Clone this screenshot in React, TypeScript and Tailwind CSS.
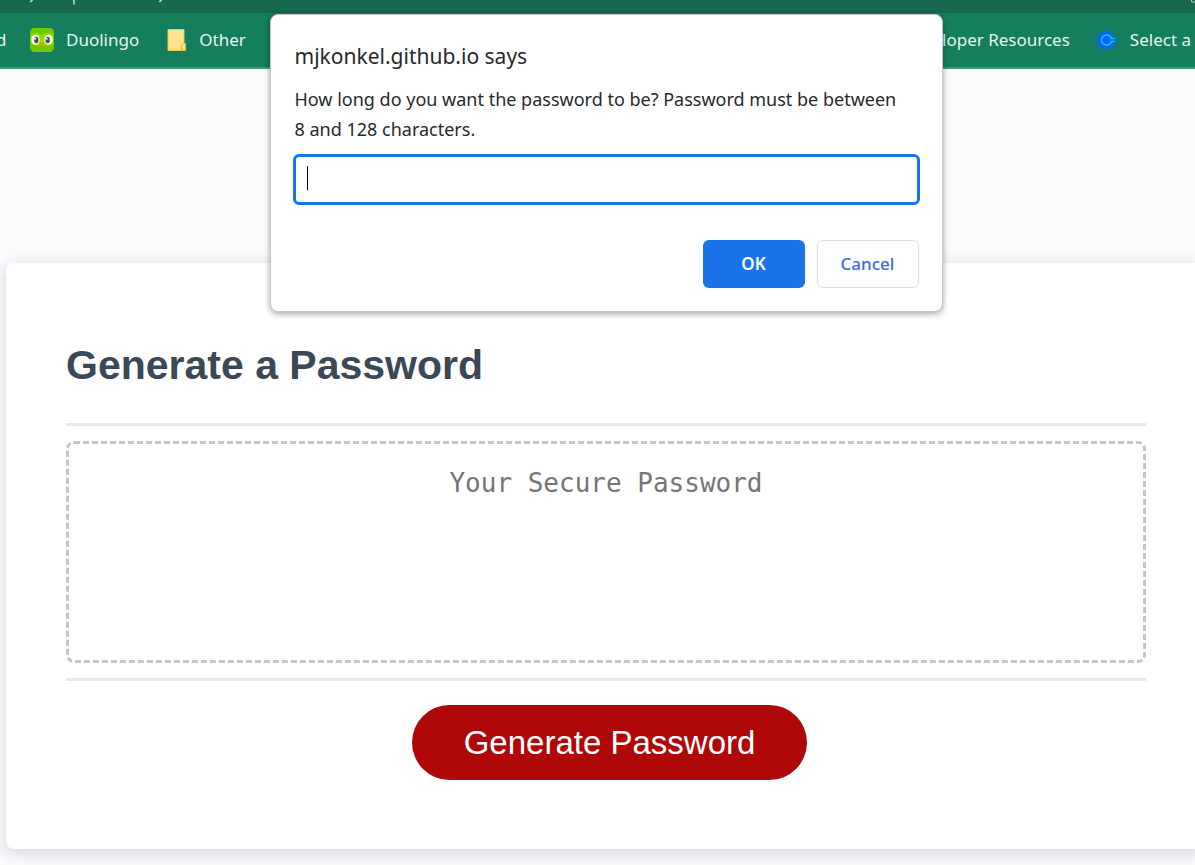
import React from "react";

const bookmarkText = "whitespace-nowrap text-[17px] leading-6 text-[#e4f5ee]";

function OwlIcon() {
  return (
    <svg width="24" height="24" viewBox="0 0 24 24" aria-hidden="true" className="shrink-0">
      <rect width="24" height="24" rx="4.500" fill="#72c800" />
      <path d="M1 8Q1 5 5.500 5Q10 5 12 7.500Q14 5 18.500 5Q23 5 23 8V14Q23 17.500 18 17.500H6Q1 17.500 1 14Z" fill="#8fe000" />
      <ellipse cx="5.500" cy="11.800" rx="4.200" ry="5" fill="#fff" />
      <ellipse cx="18.500" cy="11.800" rx="4.200" ry="5" fill="#fff" />
      <ellipse cx="6.300" cy="12" rx="2.200" ry="3.200" fill="#4b4b4b" />
      <ellipse cx="17.700" cy="12" rx="2.200" ry="3.200" fill="#4b4b4b" />
      <circle cx="5.300" cy="10.700" r="1" fill="#fff" />
      <circle cx="16.700" cy="10.700" r="1" fill="#fff" />
      <path d="M9.500 15Q12 13 14.500 15Q13.500 18 12 18Q10.500 18 9.500 15Z" fill="#f49000" />
    </svg>
  );
}

function FolderIcon() {
  return (
    <svg width="20" height="24" viewBox="0 0 20 24" aria-hidden="true" className="shrink-0">
      <path d="M1 1.500H17V15.500H18.500V22.500H1Z" fill="#ffe48e" stroke="#e9c655" />
      <path d="M14.500 22.500V17L17 15.500L18.500 16V22.500Z" fill="#ffe08a" stroke="#e0b63e" />
    </svg>
  );
}

function CalendarIcon() {
  return (
    <svg width="24" height="24" viewBox="0 0 24 24" aria-hidden="true" className="shrink-0">
      <circle cx="12" cy="12" r="11" fill="none" stroke="#006bff" strokeOpacity=".7" strokeDasharray="4 1.500" />
      <circle cx="12" cy="12" r="9" fill="#0568f0" />
      <path
        d="M21 10.500H17.500C16.500 7.800 14.500 7 12.500 7A5 5 0 0 0 12.500 17C14.500 17 16.500 16.200 17.500 13.500H21"
        fill="none"
        stroke="#14c4fa"
        strokeWidth="1.500"
      />
    </svg>
  );
}

export default function App() {
  return (
    <div className="relative min-h-screen overflow-hidden bg-[#fafbfd] font-['Noto_Sans','Open_Sans',sans-serif]">
      <div className="flex h-[13px] items-start justify-between overflow-hidden bg-[#186850]">
        <svg width="200" height="6" viewBox="0 0 200 6" aria-hidden="true">
          <path d="M30 1.500C31.500 1.500 32 1 32.500 0M74 0V4.500M159 1.500C160.500 1.500 161 1 161.500 0" fill="none" stroke="#c3dcd3" strokeWidth="1.500" />
        </svg>
        <svg width="4" height="3" viewBox="0 0 4 3" aria-hidden="true">
          <path d="M.5 0V2H4" fill="none" stroke="#a9cdc0" />
        </svg>
      </div>
      <nav className="flex h-14 items-center justify-between overflow-hidden border-b-2 border-[#4a957c] bg-[#157e5d] pb-px pr-1">
        <div className="flex items-center">
          <a href="#d" className={bookmarkText + " -ml-1 w-[34px]"}>d</a>
          <a href="#duolingo" className={bookmarkText + " flex items-center gap-3"}>
            <OwlIcon />
            Duolingo
          </a>
          <a href="#other" className={bookmarkText + " ml-7 flex items-center gap-3"}>
            <FolderIcon />
            Other
          </a>
        </div>
        <div className="flex items-center gap-6">
          <a href="#resources" className={bookmarkText}>Developer Resources</a>
          <a href="#select" className={bookmarkText + " flex items-center gap-3"}>
            <CalendarIcon />
            Select a
          </a>
        </div>
      </nav>

      <main className="-mr-3 ml-1.5 mt-[194px] rounded-lg bg-white px-[60px] pb-[69px] pt-[74px] shadow-[0_4px_16px_rgba(30,45,60,0.18)]">
        <h1 className="font-['Liberation_Sans',Arial,sans-serif] text-[41px] font-bold leading-[56px] text-[#3b4855]">
          Generate a Password
        </h1>
        <div className="mr-px mt-[30px] border-y-[3px] border-[#e7e8e9] py-[15px]">
          <textarea
            aria-label="Your Secure Password"
            placeholder="Your Secure Password"
            readOnly
            className="block h-[222px] w-full resize-none rounded-lg border-[3px] border-dashed border-[#c1c6cb] bg-white px-6 py-[21px] text-center font-['DejaVu_Sans_Mono',monospace] text-[26px] leading-9 outline-none placeholder:text-[#757575]"
          />
        </div>
        <div className="mt-6 flex justify-center pl-1.5">
          <button className="h-[75px] rounded-full bg-[#b00809] px-[52px] font-['Liberation_Sans',Arial,sans-serif] text-[33px] text-white">
            Generate Password
          </button>
        </div>
      </main>

      <div
        role="dialog"
        aria-labelledby="dialog-title"
        className="absolute left-1/2 top-3.5 -ml-[328px] w-[673px] rounded-lg border border-[#c5c8ca] bg-white px-[22px] pb-[23px] pt-[25px] text-[#27292d] shadow-[0_2px_6px_rgba(0,0,0,0.35)]"
      >
        <h2 id="dialog-title" className="px-0.5 text-[21px] leading-8">mjkonkel.github.io says</h2>
        <label htmlFor="length" className="mt-3 block pl-0.5 pr-4 text-[18px] leading-[30px]">
          How long do you want the password to be? Password must be between 8 and 128 characters.
        </label>
        <div className="relative mt-2.5">
          <input
            id="length"
            type="text"
            className="block h-[51px] w-full rounded-md border-[3px] border-[#1a73e8] bg-white px-2.5 text-[18px] caret-transparent outline-none"
          />
          <span aria-hidden="true" className="pointer-events-none absolute left-3.5 top-3 h-6 w-px bg-black" />
        </div>
        <div className="mt-[35px] flex justify-end gap-3 pr-px">
          <button className="h-12 w-[102px] rounded-md bg-[#1a73e8] text-[17px] font-semibold text-white">OK</button>
          <button className="h-12 w-[102px] rounded-md border border-[#dadce0] bg-white text-[17px] font-medium text-[#3a6bd8]">
            Cancel
          </button>
        </div>
      </div>
    </div>
  );
}
